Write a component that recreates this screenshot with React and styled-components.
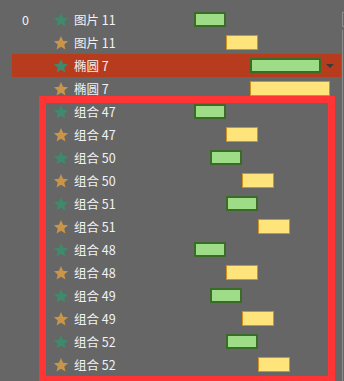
import React from 'react';
import styled, { createGlobalStyle } from 'styled-components';

const rows = [
    { idx: '0', kind: 'green', name: '图片 11', offset: 0, width: 32 },
    { kind: 'gold', name: '图片 11', offset: 32, width: 32 },
    { kind: 'green', name: '椭圆 7', offset: 56, width: 71, active: true },
    { kind: 'gold', name: '椭圆 7', offset: 56, width: 80 },
    { kind: 'green', name: '组合 47', offset: 0, width: 32 },
    { kind: 'gold', name: '组合 47', offset: 32, width: 32 },
    { kind: 'green', name: '组合 50', offset: 16, width: 32 },
    { kind: 'gold', name: '组合 50', offset: 48, width: 32 },
    { kind: 'green', name: '组合 51', offset: 32, width: 32 },
    { kind: 'gold', name: '组合 51', offset: 64, width: 32 },
    { kind: 'green', name: '组合 48', offset: 0, width: 32 },
    { kind: 'gold', name: '组合 48', offset: 32, width: 32 },
    { kind: 'green', name: '组合 49', offset: 16, width: 32 },
    { kind: 'gold', name: '组合 49', offset: 48, width: 32 },
    { kind: 'green', name: '组合 52', offset: 32, width: 32 },
    { kind: 'gold', name: '组合 52', offset: 64, width: 32 },
];

const Star = ({ kind }) => (
    <StarIcon viewBox="0 0 24 24" $kind={kind}>
        <path d="M12 1.5l3.1 7.1 7.6.6-5.8 5 1.8 7.5L12 17.7l-6.7 4 1.8-7.5-5.8-5 7.6-.6z" />
    </StarIcon>
);

const App = () => {
    return (
        <>
            <GlobalStyle />
            <Panel>
                <List>
                    {rows.map((r, i) => (
                        <Row key={i} $active={r.active}>
                            <Index>{r.idx}</Index>
                            <Star kind={r.kind} />
                            <Name>{r.name}</Name>
                            <Track>
                                <Bar
                                    $kind={r.kind}
                                    style={{ marginLeft: r.offset, width: r.width }}
                                />
                                {r.active && <Caret />}
                            </Track>
                        </Row>
                    ))}
                    <Highlight />
                </List>
                <ScrollBar>
                    <ScrollThumb />
                </ScrollBar>
            </Panel>
        </>
    );
}

export default App;

const GlobalStyle = createGlobalStyle`
    html, body{
        margin: 0;
        padding: 0;
        background: #666666;
    }
    body{
        font-family: "Noto Sans CJK SC", "Noto Sans", sans-serif;
    }
`

const Panel = styled.div`
    display: flex;
    width: 344px;
    height: 381px;
    overflow: hidden;
    background: #666666;
`

const List = styled.div`
    position: relative;
    flex: 1;
    padding-top: 8px;
`

const Row = styled.div`
    display: flex;
    align-items: center;
    height: 23px;
    margin-left: 12px;
    width: 329px;
    background: ${p => p.$active ? '#b73b1d' : 'transparent'};
`

const Index = styled.span`
    width: 31px;
    padding-left: 10px;
    font-size: 12.5px;
    color: #f0f2f5;
`

const StarIcon = styled.svg`
    width: 16px;
    height: 16px;
    fill: ${p => p.$kind === 'green' ? '#3f8a6d' : '#c99548'};
`

const Name = styled.span`
    width: 120px;
    margin-left: 5px;
    font-size: 12.5px;
    line-height: 22px;
    color: #f0f2f5;
    white-space: nowrap;
`

const Track = styled.div`
    flex: 1;
    display: flex;
    align-items: center;
    height: 100%;
`

const Bar = styled.div`
    box-sizing: border-box;
    height: 15px;
    background: ${p => p.$kind === 'green' ? '#9fdc88' : '#ffe47b'};
    border: ${p => p.$kind === 'green' ? '2px solid #3b6b29' : '1.5px solid #d3921f'};
`

const Caret = styled.span`
    margin-left: 5px;
    width: 0;
    height: 0;
    border-left: 4px solid transparent;
    border-right: 4px solid transparent;
    border-top: 4px solid #3a3a3a;
`

const Highlight = styled.div`
    position: absolute;
    top: 96px;
    left: 39px;
    width: 296px;
    height: 287px;
    box-sizing: border-box;
    border: 7px solid #ff3434;
    pointer-events: none;
`

const ScrollBar = styled.div`
    width: 2px;
    margin-left: 1px;
    padding-top: 12px;
    display: flex;
    flex-direction: column;
    gap: 3px;
    &::after{
        content: '';
        flex: 1;
        border-left: 1px solid #8c8c8c;
    }
`

const ScrollThumb = styled.div`
    height: 13px;
    border: 1px solid #8c8c8c;
    border-right: none;
`
